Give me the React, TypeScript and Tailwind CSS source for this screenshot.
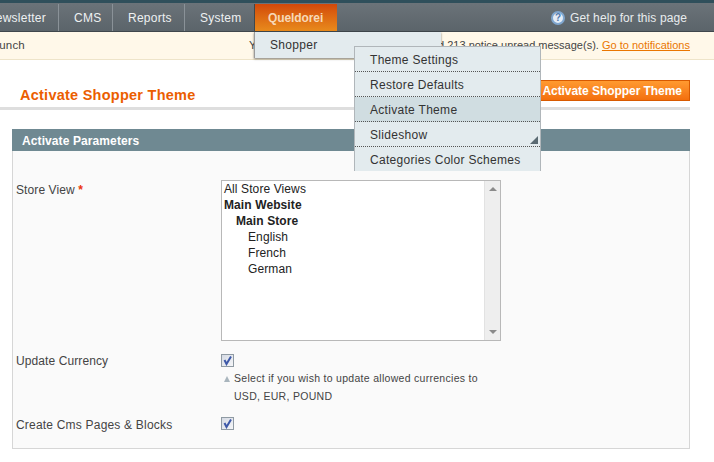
import React from 'react';

const NavItem = ({ label, className = '' }: { label: string; className?: string }) => (
  <a className={`h-full flex items-center border-r border-[#8a9298] shrink-0 tracking-[0.25px] text-[#eef1f2] ${className}`}>{label}</a>
);

const CheckBox = () => (
  <span className="w-[13px] h-[13px] border border-[#8f9aa3] bg-gradient-to-br from-[#d5dae4] to-[#f5f6f8] flex items-center justify-center">
    <svg viewBox="0 0 11 11" className="w-[11px] h-[11px]">
      <path d="M2.5 5 L4.5 9 L9 1.5" fill="none" stroke="#3d58a8" strokeWidth="2" />
    </svg>
  </span>
);

const subMenu = ['Theme Settings', 'Restore Defaults', 'Activate Theme', 'Slideshow', 'Categories Color Schemes'];

export default function App() {
  return (
    <div className="relative w-[714px] h-[462px] overflow-hidden bg-white font-['Liberation_Sans',Arial,sans-serif] text-[12px] text-[#444]">
      {/* Top nav */}
      <div className="border-t-[3px] border-[#2f4f5b] border-b border-b-[#3f474c] h-[32px] pt-px bg-gradient-to-b from-[#6b7379] to-[#5b646a] flex items-center">
        <div className="h-[27px] flex items-center">
          <NavItem label="Newsletter" className="w-[59px] justify-end pr-[12px] overflow-hidden" />
          <NavItem label="CMS" className="w-[54px] pl-[15px]" />
          <NavItem label="Reports" className="w-[72px] pl-[15px]" />
          <NavItem label="System" className="w-[69px] pl-[15px] border-r-0" />
          <a className="h-full w-[83px] flex items-center pl-[13px] font-bold tracking-[-0.1px] text-[#f7d9b8] bg-gradient-to-b from-[#d2480a] to-[#e88a1c] border-l border-[#3f474c]">Queldorei</a>
        </div>
        <div className="ml-auto mr-[27px] flex items-center gap-[5px] text-[#e8ecee] tracking-[0.1px]">
          <span className="w-[14px] h-[14px] rounded-full bg-[#e4edf7] border-2 border-[#7fa6cf] text-[#4f78ac] text-[10px] font-bold leading-none flex items-center justify-center">?</span>
          <span>Get help for this page</span>
        </div>
      </div>

      {/* Notice bar */}
      <div className="h-[28px] bg-[#fff8e9] border-b border-[#eee4c9] flex items-center justify-between pr-[24px] text-[11px]">
        <span className="ml-[-14px] text-[11.5px] tracking-[0.2px]">Launch</span>
        <span>
          You have 6 critical, 8 major, 5 minor and 213 notice unread message(s).{' '}
          <a className="text-[#ea7601] underline">Go to notifications</a>
        </span>
      </div>

      {/* Content */}
      <div className="pr-[24px]">
        <div className="h-[50px] flex items-end justify-between pl-5 pb-[3px] border-b-[3px] border-[#dedede]">
          <h1 className="text-[14.5px] leading-[18px] font-bold text-[#eb5e00] tracking-[0.25px]">Activate Shopper Theme</h1>
          <button className="h-[21px] w-[156px] mb-[3px] border border-[#d85a00] bg-gradient-to-b from-[#ff9a30] to-[#f36f0c] text-white font-bold text-right pr-[7px] tracking-[-0.05px]">Activate Shopper Theme</button>
        </div>

        <div className="ml-3 mt-[19px]">
          <div className="h-[22px] bg-[#6f8992] text-white font-bold flex items-center pl-[10px] pt-[2px] tracking-[0.1px]">Activate Parameters</div>
          <div className="h-[298px] bg-[#fafafa] border border-t-0 border-[#d6d6d6] pl-[3px] pt-[29px]">
            <div className="flex">
              <label className="w-[205px] pt-px tracking-[0.1px]">Store View <span className="text-[#eb340a] font-bold">*</span></label>
              <div className="w-[280px] h-[161px] bg-white border border-[#b8b8b8] flex">
                <div className="flex-1 pl-[2px] leading-[16px] text-[#222] tracking-[0.1px]">
                  <div>All Store Views</div>
                  <div className="font-bold">Main Website</div>
                  <div className="font-bold pl-3">Main Store</div>
                  <div className="pl-6">English</div>
                  <div className="pl-6">French</div>
                  <div className="pl-6">German</div>
                </div>
                <div className="w-[16px] bg-[#eeeeee] border-l border-[#e2e2e2] flex flex-col items-center justify-between py-[6px]">
                  <span className="w-0 h-0 border-x-[4px] border-x-transparent border-b-[4px] border-b-[#8a8a8a]" />
                  <span className="w-0 h-0 border-x-[4px] border-x-transparent border-t-[4px] border-t-[#8a8a8a]" />
                </div>
              </div>
            </div>

            <div className="flex mt-[13px]">
              <label className="w-[205px] -mt-[2px] tracking-[0.1px]">Update Currency</label>
              <div>
                <CheckBox />
                <div className="relative mt-[2px] pl-[13px] text-[10.5px] leading-[18px] tracking-[0.29px]">
                  <span className="absolute left-[3px] top-[7px] w-0 h-0 border-x-[3.5px] border-x-transparent border-b-[6px] border-b-[#a9b5bd]" />
                  Select if you wish to update allowed currencies to
                  <br />
                  USD, EUR, POUND
                </div>
              </div>
            </div>

            <div className="flex mt-[12px]">
              <label className="w-[205px] -mt-px tracking-[0.2px]">Create Cms Pages &amp; Blocks</label>
              <CheckBox />
            </div>
          </div>
        </div>
      </div>

      {/* Dropdown menus */}
      <div className="absolute left-[254px] top-[32px] w-[187px] h-[26px] bg-[#e3ebee] border-l border-[#9a9a9a] shadow-[0_1px_2px_rgba(0,0,0,0.5)] pl-[15px] pt-[4px] tracking-[0.3px] text-[#333]">Shopper</div>
      <div className="absolute left-[354px] top-[46px] w-[187px] h-[125px] overflow-hidden bg-[#e3ebee] border-x border-t border-[#b0b6ba] text-[#333] tracking-[0.3px]">
        {subMenu.map((item, i) => (
          <div key={item} className={`relative h-[25px] pl-[15px] pt-[6px] leading-[14px] ${i < 4 ? 'border-b border-dotted border-[#555]' : ''} ${i === 2 ? 'bg-[#d0dde1]' : ''}`}>
            {item}
            {item === 'Slideshow' && (
              <svg viewBox="0 0 8 8" className="absolute right-[2px] bottom-[2px] w-[8px] h-[8px]">
                <path d="M0 8 L8 0 L8 8 Z" fill="#5a6a72" />
              </svg>
            )}
          </div>
        ))}
      </div>
    </div>
  );
}
